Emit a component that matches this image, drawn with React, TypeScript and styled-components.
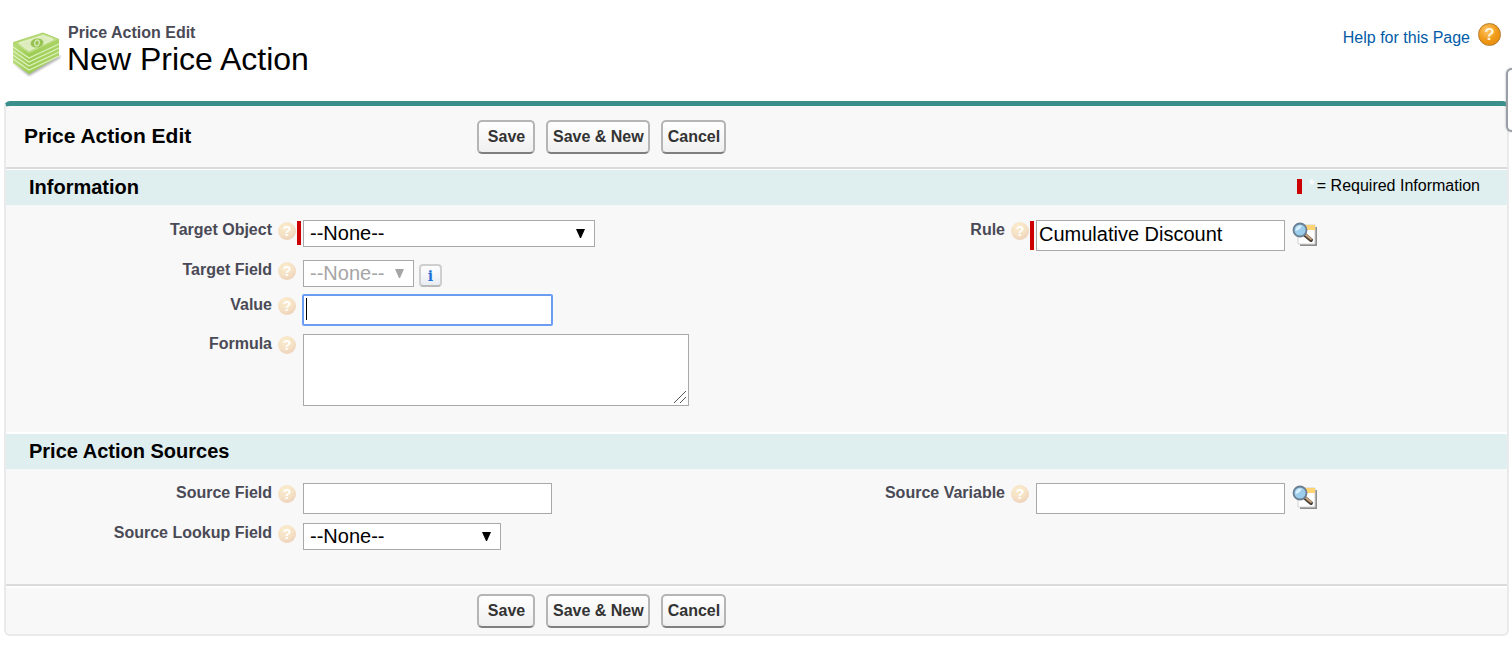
import React from "react";
import styled, { createGlobalStyle } from "styled-components";

const GlobalStyle = createGlobalStyle`
  *, *::before, *::after { box-sizing: border-box; }
  body {
    margin: 0;
    background: #fff;
    color: #000;
    font: 16px/20px "Liberation Sans", Arial, sans-serif;
  }
  input, select, textarea, button { font-family: inherit; margin: 0; }
`;

const Page = styled.div`
  padding: 20px 3px 12px 4px;
`;

const Header = styled.header`
  display: flex;
  align-items: flex-start;
  padding: 3px 8px 0;
  height: 81px;
`;

const HeaderIcon = styled.svg`
  width: 52px;
  height: 52px;
  margin: 5px 3px 0 0;
  flex: none;
`;

const Heading = styled.h1`
  margin: 0;
  flex: 1;
  font-weight: 400;
`;

const HeadingType = styled.span`
  display: block;
  padding-left: 1px;
  font-weight: 700;
  font-size: 16px;
  line-height: 20px;
  color: #4a4a56;
`;

const HeadingName = styled.span`
  display: block;
  font-size: 32px;
  line-height: 32px;
`;

const HelpLink = styled.a`
  display: flex;
  align-items: flex-start;
  gap: 8px;
  color: #015ba7;
  text-decoration: none;
`;

const HelpText = styled.span`
  padding-top: 5px;
`;

const HelpBall = styled.span`
  display: grid;
  place-items: center;
  width: 23px;
  height: 23px;
  border: 1px solid #b57a2c;
  border-radius: 50%;
  background: radial-gradient(circle at 40% 30%, #ffc766 0%, #f09a18 50%, #e08608 100%);
  color: #fff3dc;
  font: 700 17px/20px "Liberation Sans", Arial, sans-serif;
`;

const Panel = styled.form`
  border: 2px solid #eaeaea;
  border-top: 5px solid #3a8f8b;
  border-radius: 6px;
  background: #f8f8f8;
`;

const PanelBar = styled.div<{ $footer?: boolean }>`
  display: flex;
  align-items: center;
  padding: ${(p) => (p.$footer ? "8px 0 6px" : "14px 0 13px")};
  border: 0 solid #dbdbdb;
  border-width: ${(p) => (p.$footer ? "2px 0 0" : "0 0 2px")};
  box-shadow: ${(p) => (p.$footer ? "inset 0 2px #fff" : "none")};
`;

const PanelTitle = styled.h2`
  margin: 0;
  width: 471px;
  padding: 0 18px 2px;
  font-size: 21px;
  line-height: 24px;
`;

const Buttons = styled.div`
  display: flex;
  gap: 11px;
`;

const Button = styled.button`
  height: 34px;
  min-width: 58px;
  padding: 0 4px 0 5px;
  border: 2px solid #b5b5b5;
  border-bottom-color: #7f7f7f;
  border-radius: 5px;
  background: linear-gradient(#fff, #f0f0f0);
  color: #333;
  font-size: 16px;
  font-weight: 700;
  white-space: nowrap;
`;

const SectionBand = styled.div<{ $first?: boolean }>`
  display: flex;
  align-items: center;
  justify-content: space-between;
  padding: 5px 27px 6px 23px;
  border-top: ${(p) => (p.$first ? 1 : 2)}px solid #fff;
  background: #dfeeee;
`;

const SectionTitle = styled.h3`
  margin: 0;
  font-size: 20px;
  line-height: 24px;
`;

const Legend = styled.span`
  display: flex;
  align-items: center;
  padding-bottom: 2px;
`;

const LegendMark = styled.span`
  width: 5px;
  height: 15px;
  margin-right: 7px;
  background: #c00;
`;

const LegendStar = styled.span`
  margin-right: 2px;
  color: #fff;
`;

const Fields = styled.div<{ $last?: boolean }>`
  display: grid;
  grid-template-columns: 1fr 1fr;
  row-gap: 8px;
  padding: ${(p) => (p.$last ? "14px 35px 34px 0" : "15px 35px 26px 0")};
`;

const Field = styled.div<{ $column: number }>`
  grid-column: ${(p) => p.$column};
  display: flex;
  align-items: flex-start;
`;

const LabelCell = styled.div`
  display: flex;
  justify-content: flex-end;
  gap: 6px;
  flex: none;
  width: 290px;
`;

const Label = styled.label`
  font-weight: 700;
  color: #4a4a56;
`;

const HintBall = styled.span`
  display: grid;
  place-items: center;
  width: 18px;
  height: 18px;
  margin-top: 2px;
  border-radius: 50%;
  background: radial-gradient(circle at 40% 25%, #faeccb 0%, #f5e1c6 50%, #e8c8b0 100%);
  color: #fff;
  font: 700 14px/18px "Liberation Sans", Arial, sans-serif;
`;

const RequiredBar = styled.span<{ $on?: boolean }>`
  align-self: stretch;
  flex: none;
  width: 4px;
  margin: 1px 2px 2px 1px;
  background: ${(p) => (p.$on ? "#c00" : "transparent")};
`;

const ControlGroup = styled.div`
  display: flex;
  align-items: flex-start;
`;

const TextInput = styled.input`
  width: 249px;
  height: 31px;
  padding: 0 2px 2px;
  border: 1px solid #a9a9a9;
  background: #fff;
  font-size: 20px;
  outline: none;
`;

const ActiveBox = styled.div`
  position: relative;
  height: 31px;
  &::after {
    content: "";
    position: absolute;
    left: 3px;
    top: 3px;
    width: 1px;
    height: 22px;
    background: #000;
  }
`;

const ActiveInput = styled(TextInput)`
  display: block;
  height: 30px;
  border-color: #6a9bee;
  box-shadow: 0 0 0 1px #6a9ff5;
  border-radius: 1px;
  caret-color: transparent;
`;

const TextArea = styled.textarea`
  display: block;
  width: 386px;
  height: 72px;
  padding: 2px;
  border: 1px solid #a9a9a9;
  background: #fff;
  font-size: 20px;
  resize: both;
  &::-webkit-resizer { background: transparent; }
`;

const TextAreaBox = styled.div`
  position: relative;
`;

const Grip = styled.svg`
  position: absolute;
  right: 2px;
  bottom: 2px;
  width: 13px;
  height: 13px;
  pointer-events: none;
`;

const SelectBox = styled.span<{ $width: number }>`
  display: grid;
  align-items: center;
  width: ${(p) => p.$width}px;
  height: 27px;
  > * { grid-area: 1 / 1; }
`;

const Select = styled.select`
  appearance: none;
  width: 100%;
  height: 27px;
  padding: 0 6px 1px;
  border: 1px solid #a9a9a9;
  border-radius: 0;
  background: #fff;
  color: #000;
  font-size: 20px;
  line-height: 24px;
  opacity: 1;
  &:disabled { color: #a5a5a5; }
`;

const SelectArrow = styled.svg<{ $off?: boolean }>`
  justify-self: end;
  width: 9px;
  height: 9px;
  margin-right: 10px;
  fill: ${(p) => (p.$off ? "#a5a5a5" : "#000")};
  pointer-events: none;
`;

const InfoButton = styled.button`
  width: 23px;
  height: 23px;
  margin: 4px 0 0 5px;
  padding: 0;
  border: 2px solid #cfcfcf;
  border-bottom-color: #b9b9b9;
  border-radius: 4px;
  background: linear-gradient(#fdfdfd, #e9edf2);
  color: #1f72d6;
  font: 700 14px/18px "DejaVu Serif", serif;
`;

const IconButton = styled.button`
  width: 26px;
  height: 26px;
  margin: 2px 0 0 7px;
  padding: 0;
  border: 0;
  background: none;
  svg { display: block; }
`;

const LookupGroup = styled(ControlGroup)`
  min-height: 31px;
  margin-bottom: 1px;
`;

const SideTab = styled.button`
  position: absolute;
  top: 68px;
  right: 0;
  width: 6px;
  height: 64px;
  padding: 0;
  border: 2px solid #9a9fa5;
  border-right: 0;
  border-radius: 6px 0 0 6px;
  background: #fff;
  box-shadow: 0 0 2px #9a9fa5;
`;

const stackSeams = [4, 8, 12, 16];

function MoneyIcon() {
  return (
    <HeaderIcon viewBox="0 0 52 52" aria-hidden="true">
      <defs>
        <linearGradient id="note" x1="0" y1="0" x2="1" y2="1">
          <stop offset="0" stopColor="#a9d05f" />
          <stop offset="0.5" stopColor="#c9e398" />
          <stop offset="1" stopColor="#a3cf5c" />
        </linearGradient>
        <linearGradient id="side" x1="0" y1="0" x2="1" y2="0">
          <stop offset="0" stopColor="#b9dc7c" />
          <stop offset="0.35" stopColor="#9ccd52" />
          <stop offset="1" stopColor="#a9d466" />
        </linearGradient>
        <filter id="soft" x="-20%" y="-20%" width="140%" height="140%">
          <feGaussianBlur stdDeviation="1" />
        </filter>
      </defs>
      <path d="M1 35L17 48L48 30V27L17 43Z" fill="#777" opacity="0.6" filter="url(#soft)" />
      <path d="M1 14.500L17 25L47 11V28L17 46L1 35Z" fill="url(#side)" />
      {stackSeams.map((y) => (
        <path
          key={y}
          transform={`translate(0 ${y})`}
          d="M1 15L17 26L47 12"
          fill="none"
          stroke="#dff0bd"
          strokeWidth="1.300"
        />
      ))}
      <path d="M1.500 14.500L31 5L47 11.500L17 25.500Z" fill="url(#note)" stroke="#a8d160" />
      <path d="M7 15L31 7.500L41 11.500L17 22.500Z" fill="#dcecbc" stroke="#edf6da" strokeWidth="0.800" />
      <ellipse cx="25" cy="15" rx="6.500" ry="4.500" fill="#96c353" transform="rotate(-12 25 15)" />
      <ellipse cx="25" cy="15" rx="2.200" ry="3" fill="none" stroke="#d7eab4" strokeWidth="1.300" transform="rotate(15 25 15)" />
    </HeaderIcon>
  );
}

function LookupIcon() {
  return (
    <svg width="26" height="26" viewBox="0 0 26 26" aria-hidden="true">
      <path d="M8 5H25V24H8Z" fill="#8d8d8d" />
      <path d="M6 3H23V22H6Z" fill="#fff" stroke="#d3d3d3" />
      <path d="M12 3H23V8H12Z" fill="#ffd272" />
      <path d="M13 13L19 18" stroke="#4a4038" strokeWidth="4" strokeLinecap="round" />
      <path d="M14 13L19 17" stroke="#c9a67e" strokeWidth="2" strokeLinecap="round" />
      <circle cx="8" cy="8" r="6.500" fill="#9ccdec" stroke="#6b7f92" strokeWidth="1.800" />
      <path d="M3.500 9C3.500 5 6 3 10 3.500C9 6 7 8.500 3.500 9Z" fill="#d8effc" />
    </svg>
  );
}

type FieldRowProps = {
  id: string;
  label: string;
  column?: number;
  required?: boolean;
  children: React.ReactNode;
};

function FieldRow({ id, label, column = 1, required, children }: FieldRowProps) {
  return (
    <Field $column={column}>
      <LabelCell>
        <Label htmlFor={id}>{label}</Label>
        <HintBall aria-hidden="true">?</HintBall>
      </LabelCell>
      <ControlGroup>
        <RequiredBar $on={required} />
        {children}
      </ControlGroup>
    </Field>
  );
}

function Picklist({ id, width, disabled }: { id: string; width: number; disabled?: boolean }) {
  return (
    <SelectBox $width={width}>
      <Select id={id} disabled={disabled} defaultValue="">
        <option value="">--None--</option>
      </Select>
      <SelectArrow viewBox="0 0 9 9" $off={disabled} aria-hidden="true">
        <path d="M0 0H9L5 9H4Z" />
      </SelectArrow>
    </SelectBox>
  );
}

function Lookup({ id, value, name }: { id: string; value: string; name: string }) {
  return (
    <LookupGroup>
      <TextInput id={id} type="text" defaultValue={value} />
      <IconButton type="button" aria-label={`${name} Lookup`}>
        <LookupIcon />
      </IconButton>
    </LookupGroup>
  );
}

function ActionButtons() {
  return (
    <Buttons>
      <Button type="button">Save</Button>
      <Button type="button">Save &amp; New</Button>
      <Button type="button">Cancel</Button>
    </Buttons>
  );
}

export default function App() {
  return (
    <Page>
      <GlobalStyle />
      <Header>
        <MoneyIcon />
        <Heading>
          <HeadingType>Price Action Edit</HeadingType>
          <HeadingName>New Price Action</HeadingName>
        </Heading>
        <HelpLink href="#help">
          <HelpText>Help for this Page</HelpText>
          <HelpBall aria-hidden="true">?</HelpBall>
        </HelpLink>
      </Header>

      <Panel>
        <PanelBar>
          <PanelTitle>Price Action Edit</PanelTitle>
          <ActionButtons />
        </PanelBar>

        <SectionBand $first>
          <SectionTitle>Information</SectionTitle>
          <Legend>
            <LegendMark />
            <LegendStar aria-hidden="true">*</LegendStar>
            <span>= Required Information</span>
          </Legend>
        </SectionBand>
        <Fields>
          <FieldRow id="target-object" label="Target Object" required>
            <Picklist id="target-object" width={292} />
          </FieldRow>
          <FieldRow id="rule" label="Rule" column={2} required>
            <Lookup id="rule" value="Cumulative Discount" name="Rule" />
          </FieldRow>
          <FieldRow id="target-field" label="Target Field">
            <Picklist id="target-field" width={111} disabled />
            <InfoButton type="button">i</InfoButton>
          </FieldRow>
          <FieldRow id="value" label="Value">
            <ActiveBox>
              <ActiveInput id="value" type="text" autoFocus />
            </ActiveBox>
          </FieldRow>
          <FieldRow id="formula" label="Formula">
            <TextAreaBox>
              <TextArea id="formula" />
              <Grip viewBox="0 0 13 13" stroke="#555" aria-hidden="true">
                <path d="M0 12L12 0M6 12L12 6" />
              </Grip>
            </TextAreaBox>
          </FieldRow>
        </Fields>

        <SectionBand>
          <SectionTitle>Price Action Sources</SectionTitle>
        </SectionBand>
        <Fields $last>
          <FieldRow id="source-field" label="Source Field">
            <TextInput id="source-field" type="text" />
          </FieldRow>
          <FieldRow id="source-variable" label="Source Variable" column={2}>
            <Lookup id="source-variable" value="" name="Source Variable" />
          </FieldRow>
          <FieldRow id="source-lookup" label="Source Lookup Field">
            <Picklist id="source-lookup" width={198} />
          </FieldRow>
        </Fields>

        <PanelBar $footer>
          <PanelTitle as="div" />
          <ActionButtons />
        </PanelBar>
      </Panel>

      <SideTab type="button" aria-label="Open sidebar" />
    </Page>
  );
}
